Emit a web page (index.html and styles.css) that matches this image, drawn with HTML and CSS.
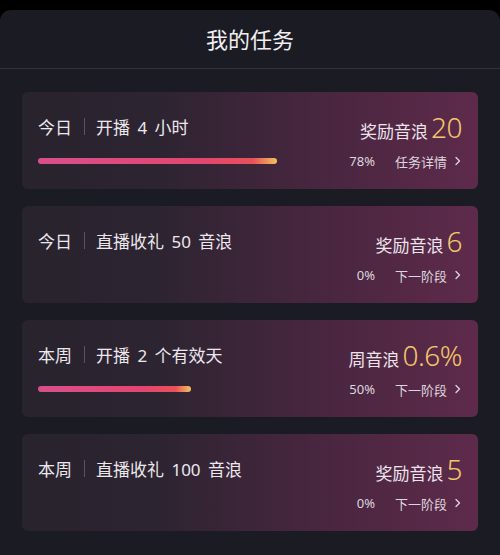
FILE: index.html
```html
<!DOCTYPE html>
<html lang="zh">
<head>
<meta charset="utf-8">
<link rel="stylesheet" href="styles.css">
</head>
<body>
<div class="panel">
  <div class="header">我的任务</div>
  <div class="list">
    <div class="card">
      <div class="left">
        <div class="title"><span class="tag">今日</span><span class="sep"></span><span>开播 4 小时</span></div>
        <div class="bar"><div class="fill" style="width:78%"></div></div>
      </div>
      <div class="right">
        <div class="reward"><span class="label">奖励音浪</span><span class="num">20</span></div>
        <div class="sub"><span class="pct">78%</span><span class="link">任务详情</span><svg class="chev" viewBox="0 0 6 10" width="6" height="10"><path d="M1 1.5 L4.5 5 L1 8.5" fill="none" stroke="#ddd6de" stroke-width="1.3" stroke-linecap="round" stroke-linejoin="round"/></svg></div>
      </div>
    </div>
    <div class="card">
      <div class="left">
        <div class="title"><span class="tag">今日</span><span class="sep"></span><span>直播收礼 50 音浪</span></div>
        <div class="bar"></div>
      </div>
      <div class="right">
        <div class="reward"><span class="label">奖励音浪</span><span class="num">6</span></div>
        <div class="sub"><span class="pct">0%</span><span class="link">下一阶段</span><svg class="chev" viewBox="0 0 6 10" width="6" height="10"><path d="M1 1.5 L4.5 5 L1 8.5" fill="none" stroke="#ddd6de" stroke-width="1.3" stroke-linecap="round" stroke-linejoin="round"/></svg></div>
      </div>
    </div>
    <div class="card">
      <div class="left">
        <div class="title"><span class="tag">本周</span><span class="sep"></span><span>开播 2 个有效天</span></div>
        <div class="bar"><div class="fill" style="width:50%"></div></div>
      </div>
      <div class="right">
        <div class="reward"><span class="label">周音浪</span><span class="num">0.6%</span></div>
        <div class="sub"><span class="pct">50%</span><span class="link">下一阶段</span><svg class="chev" viewBox="0 0 6 10" width="6" height="10"><path d="M1 1.5 L4.5 5 L1 8.5" fill="none" stroke="#ddd6de" stroke-width="1.3" stroke-linecap="round" stroke-linejoin="round"/></svg></div>
      </div>
    </div>
    <div class="card">
      <div class="left">
        <div class="title"><span class="tag">本周</span><span class="sep"></span><span>直播收礼 100 音浪</span></div>
        <div class="bar"></div>
      </div>
      <div class="right">
        <div class="reward"><span class="label">奖励音浪</span><span class="num">5</span></div>
        <div class="sub"><span class="pct">0%</span><span class="link">下一阶段</span><svg class="chev" viewBox="0 0 6 10" width="6" height="10"><path d="M1 1.5 L4.5 5 L1 8.5" fill="none" stroke="#ddd6de" stroke-width="1.3" stroke-linecap="round" stroke-linejoin="round"/></svg></div>
      </div>
    </div>
  </div>
</div>
</body>
</html>
```
FILE: styles.css
```css
html, body {
  margin: 0;
  padding: 0;
  background: #000;
  height: 555px;
  overflow: hidden;
}
body {
  padding-top: 10px;
  box-sizing: border-box;
  font-family: "Noto Sans", "Noto Sans CJK SC", sans-serif;
  color: #ebe6ec;
}
.panel {
  background: #1b1b23;
  border-radius: 11px 11px 0 0;
  height: 545px;
}
.header {
  height: 58px;
  line-height: 58px;
  text-align: center;
  font-size: 22px;
  color: #f0eef2;
  border-bottom: 1px solid #33333b;
}
.list {
  padding: 23px 22px 0;
  display: flex;
  flex-direction: column;
  gap: 17px;
}
.card {
  height: 97px;
  box-sizing: border-box;
  border-radius: 6px;
  background: linear-gradient(90deg, #28232d 0%, #2d2431 30%, #48263f 65%, #5e2a4b 100%);
  padding: 0 16px;
  display: flex;
  justify-content: space-between;
}
.left {
  display: flex;
  flex-direction: column;
  padding-top: 22px;
}
.title {
  display: flex;
  align-items: center;
  font-size: 17px;
  height: 24px;
  color: #ece8ee;
  white-space: nowrap;
  word-spacing: 3px;
}
.sep {
  width: 1px;
  height: 17px;
  background: #5a5560;
  margin: 0 11px 0 12px;
}
.bar {
  margin-top: 20px;
  width: 306px;
  height: 6px;
}
.fill {
  height: 6px;
  border-radius: 3px;
  background: linear-gradient(90deg, #d84f8c 0%, #e3466e 70%, #e8515a 90%, #f2c25e 100%);
}
.right {
  display: flex;
  flex-direction: column;
  align-items: flex-end;
  padding-top: 17px;
  flex-shrink: 0;
  white-space: nowrap;
}
.reward {
  display: flex;
  align-items: baseline;
  height: 36px;
}
.label {
  font-size: 17px;
  color: #ece4ec;
  margin-right: 3px;
}
.num {
  font-family: "Noto Sans", sans-serif;
  font-weight: 300;
  font-size: 28px;
  letter-spacing: -0.5px;
  line-height: 36px;
  color: #f3c66c;
}
.sub {
  display: flex;
  align-items: center;
  height: 18px;
  font-size: 13px;
  color: #ddd6de;
  margin-top: 7px;
}
.pct {
  margin-right: 20px;
}
.chev {
  display: block;
  margin-left: 8px;
  margin-right: 1px;
}
```
